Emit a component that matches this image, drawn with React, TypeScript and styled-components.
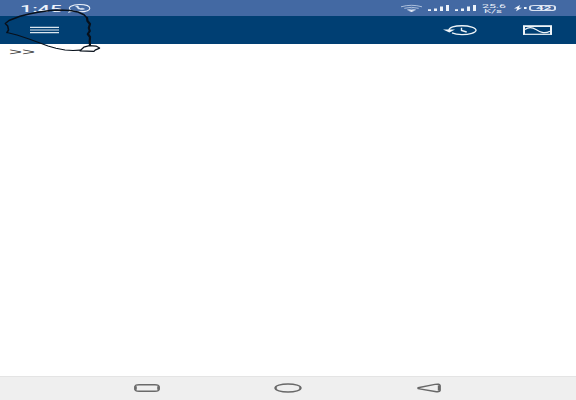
import React from 'react';
import styled, { createGlobalStyle } from 'styled-components';

const GlobalStyle = createGlobalStyle`
  * { box-sizing: border-box; }
  body { margin: 0; background: #fff; font-family: Roboto, "Liberation Sans", sans-serif; }
`;

const Screen = styled.div`
  position: relative;
  width: 576px;
  height: 400px;
  display: flex;
  flex-direction: column;
  overflow: hidden;
  background: #fff;
`;

const StatusBar = styled.header`
  display: flex;
  align-items: center;
  height: 16px;
  padding: 0 20px 0 20px;
  background: #4369a3;
  color: #edf2fa;
`;

const Toolbar = styled.nav`
  display: flex;
  align-items: center;
  height: 28px;
  padding: 0 24px 0 30px;
  background: #003f73;
`;

const Spacer = styled.div`
  flex: 1;
`;

const Icon = styled.svg<{ $gap?: number }>`
  display: block;
  flex: none;
  margin-left: ${(p) => p.$gap ?? 0}px;
  overflow: visible;
`;

const WideText = styled.span<{ $size: number; $stretch: number; $weight?: number }>`
  display: block;
  width: max-content;
  font-size: ${(p) => p.$size}px;
  line-height: 1;
  font-weight: ${(p) => p.$weight ?? 400};
  white-space: nowrap;
  transform: scaleX(${(p) => p.$stretch});
  transform-origin: 0 50%;
`;

const Clock = styled.div`
  width: 47px;
  padding-top: 2px;
`;

const Speed = styled.div`
  display: flex;
  flex-direction: column;
  width: 25px;
  margin-left: 5px;
  padding-top: 1px;
`;

const SpeedUnit = styled.div`
  margin-left: 2px;
`;

const Battery = styled.div`
  display: flex;
  align-items: center;
  width: 27px;
  height: 6px;
  margin-left: 2px;
  padding: 1px 0 0 5px;
  border: 1px solid #dbe4f2;
  border-width: 1px 2px;
  border-radius: 5px / 2px;
`;

const Workspace = styled.main`
  flex: 1;
  padding: 4px 0 0 9px;
  color: #333;
  font-family: "Liberation Sans", sans-serif;
`;

const NavigationBar = styled.footer`
  display: flex;
  align-items: center;
  height: 24px;
  padding: 0 0 1px 134px;
  border-top: 1px solid #e4e4e4;
  background: #efefef;
`;

const Annotation = styled.svg`
  position: absolute;
  left: 0;
  top: 0;
  pointer-events: none;
`;

const SignalIcon = ({ gap }: { gap: number }) => (
  <Icon $gap={gap} width="22" height="8" viewBox="0 0 22 8" fill="#eef3fa">
    <path d="M0 5.2h3v1.8H0zM6 4.4h3v2.6H6zM12 2.6h3v4.4h-3zM18 1h3v6h-3z" />
  </Icon>
);

export default function App() {
  return (
    <>
      <GlobalStyle />
      <Screen>
        <StatusBar>
          <Clock>
            <WideText $size={8.4} $stretch={2.55} $weight={500}>1:45</WideText>
          </Clock>
          <Icon $gap={1} width="23" height="9" viewBox="0 0 23 9" fill="none" stroke="#edf2fa">
            <path d="M1 8 2.4 6C-1 3.1 4.2.5 11.5.5c6 0 10.3 1.6 10.3 3.7S17.5 7.8 11.5 7.8c-2.4 0-4.5-.3-6-.8z" strokeWidth="1.1" />
            <path d="m7.5 2.3 1.8 1c-.5 1.3 2.5 2.3 5 2.3l2.2-.6-2.4-.8-1.5.4-2.3-1 .6-.7-1.3-.8z" fill="#edf2fa" strokeWidth=".5" />
          </Icon>
          <Spacer />
          <Icon width="21" height="8" viewBox="0 0 22 8" preserveAspectRatio="none" fill="none" stroke="#c9d7ec" strokeWidth=".8">
            <path d="M0 2.8q11-3 22 0M3.5 4.3q7.5-2 15 0M6.5 5.8q4.5-1.3 9 0" />
            <path d="m7 6.4 4 1.5 4-1.5q-4-.9-8 0Z" fill="#edf2fa" stroke="none" />
          </Icon>
          <SignalIcon gap={6} />
          <SignalIcon gap={5} />
          <Speed>
            <WideText $size={6} $stretch={2.05} $weight={400}>25.6</WideText>
            <SpeedUnit>
              <WideText $size={5.6} $stretch={2.05} $weight={400}>K/s</WideText>
            </SpeedUnit>
          </Speed>
          <Icon $gap={7} width="13" height="8" viewBox="0 0 13 8" fill="#f2f6fb">
            <path d="M6 .9 0 4.4h3.2L2 7.3l6-3.6H5zM10 3h2.6v2H10z" />
          </Icon>
          <Battery>
            <WideText $size={5.8} $stretch={2.3} $weight={700}>42</WideText>
          </Battery>
        </StatusBar>

        <Toolbar>
          <Icon width="29" height="8" viewBox="0 0 29 8" stroke="#dbe6ef" strokeWidth="1.2">
            <path d="M0 1.3h29M0 4h29M0 6.7h29" />
          </Icon>
          <Spacer />
          <Icon width="33" height="11" viewBox="0 0 33 11" fill="none" stroke="#eef4f8" strokeWidth="1.4">
            <path d="M5 5.2C5 2.4 10.5.8 18 .8s14 2 14 4.4-6.5 4.4-14 4.4c-4 0-7.6-.6-10-1.7" />
            <path d="M-1 4.6h12L5.4 7.4z" fill="#eef4f8" stroke="none" />
            <path d="M17.5 2.8v2.7l5.2 1.5" />
          </Icon>
          <Icon $gap={46} width="29" height="11" viewBox="0 0 29 11" fill="none" stroke="#eef4f8">
            <path d="M0 1.1h29" strokeWidth="1.8" />
            <path d="M1 1v8.6M28 1v8.6" strokeWidth="2" />
            <path d="M0 9.3h29" strokeWidth="1.2" />
            <path d="M2 4.4C6 1.5 9 1.9 13 4.4s8 4.9 14 1.8" strokeWidth="1.2" />
          </Icon>
        </Toolbar>

        <Workspace>
          <WideText $size={8.8} $stretch={2.55}>&gt;&gt;</WideText>
        </Workspace>

        <NavigationBar>
          <Icon width="26" height="8" viewBox="0 0 26 8" fill="none" stroke="#6a6a6a">
            <path d="M5 .7h16q4 0 4 2v2.6q0 2-4 2H5q-4 0-4-2V2.7q0-2 4-2Z" strokeWidth="1.4" />
            <path d="M1.5 2.2v3.6M24.5 2.2v3.6" strokeWidth="2.6" />
          </Icon>
          <Icon $gap={114} width="28" height="8" viewBox="0 0 28 8" fill="none" stroke="#686868" strokeWidth="1.4">
            <ellipse cx="14" cy="4" rx="13" ry="4" />
            <path d="M2.8 2.5Q.8 4 2.8 5.5M25.2 2.5q2 1.5 0 3" />
          </Icon>
          <Icon $gap={115} width="24" height="8" viewBox="0 0 24 8" fill="none" stroke="#686868" strokeLinejoin="round">
            <path d="M1 3.8 18 .4q5-.7 5 1v5.2q0 1.7-5 .9L1 4.6Z" strokeWidth="1.4" />
            <path d="M22.2 1.3v5.4" strokeWidth="2.8" />
          </Icon>
        </NavigationBar>

        <Annotation width="120" height="64" viewBox="0 0 120 64" fill="none" stroke="#07101b" strokeLinecap="round" strokeLinejoin="round">
          <path d="M7 32.5 8.5 30 7.7 26 5.3 23.5 9 20.5 20 16.2 29 14 38 12.2 50 10.5 60 10 70 10.6 78 12 84 14.8 87 18" strokeWidth="1.5" />
          <path d="m87 18 .5 3 2.5 3-1.2 4 1 3-2 3 2.2 3-.3 4.5.3 4" strokeWidth="2.2" />
          <path d="m7 32.5 10 2.5 12 4 11 4 8 3 8 2.2 9 1.8 8 .5 7-.4" strokeWidth="1.1" />
          <path d="m80 50.8 3.8-3.6 5.6-1.5 6.6.4 3.6 2-4.5 2-1.1 1.2z" fill="#fff" strokeWidth="1.2" />
        </Annotation>
      </Screen>
    </>
  );
}
